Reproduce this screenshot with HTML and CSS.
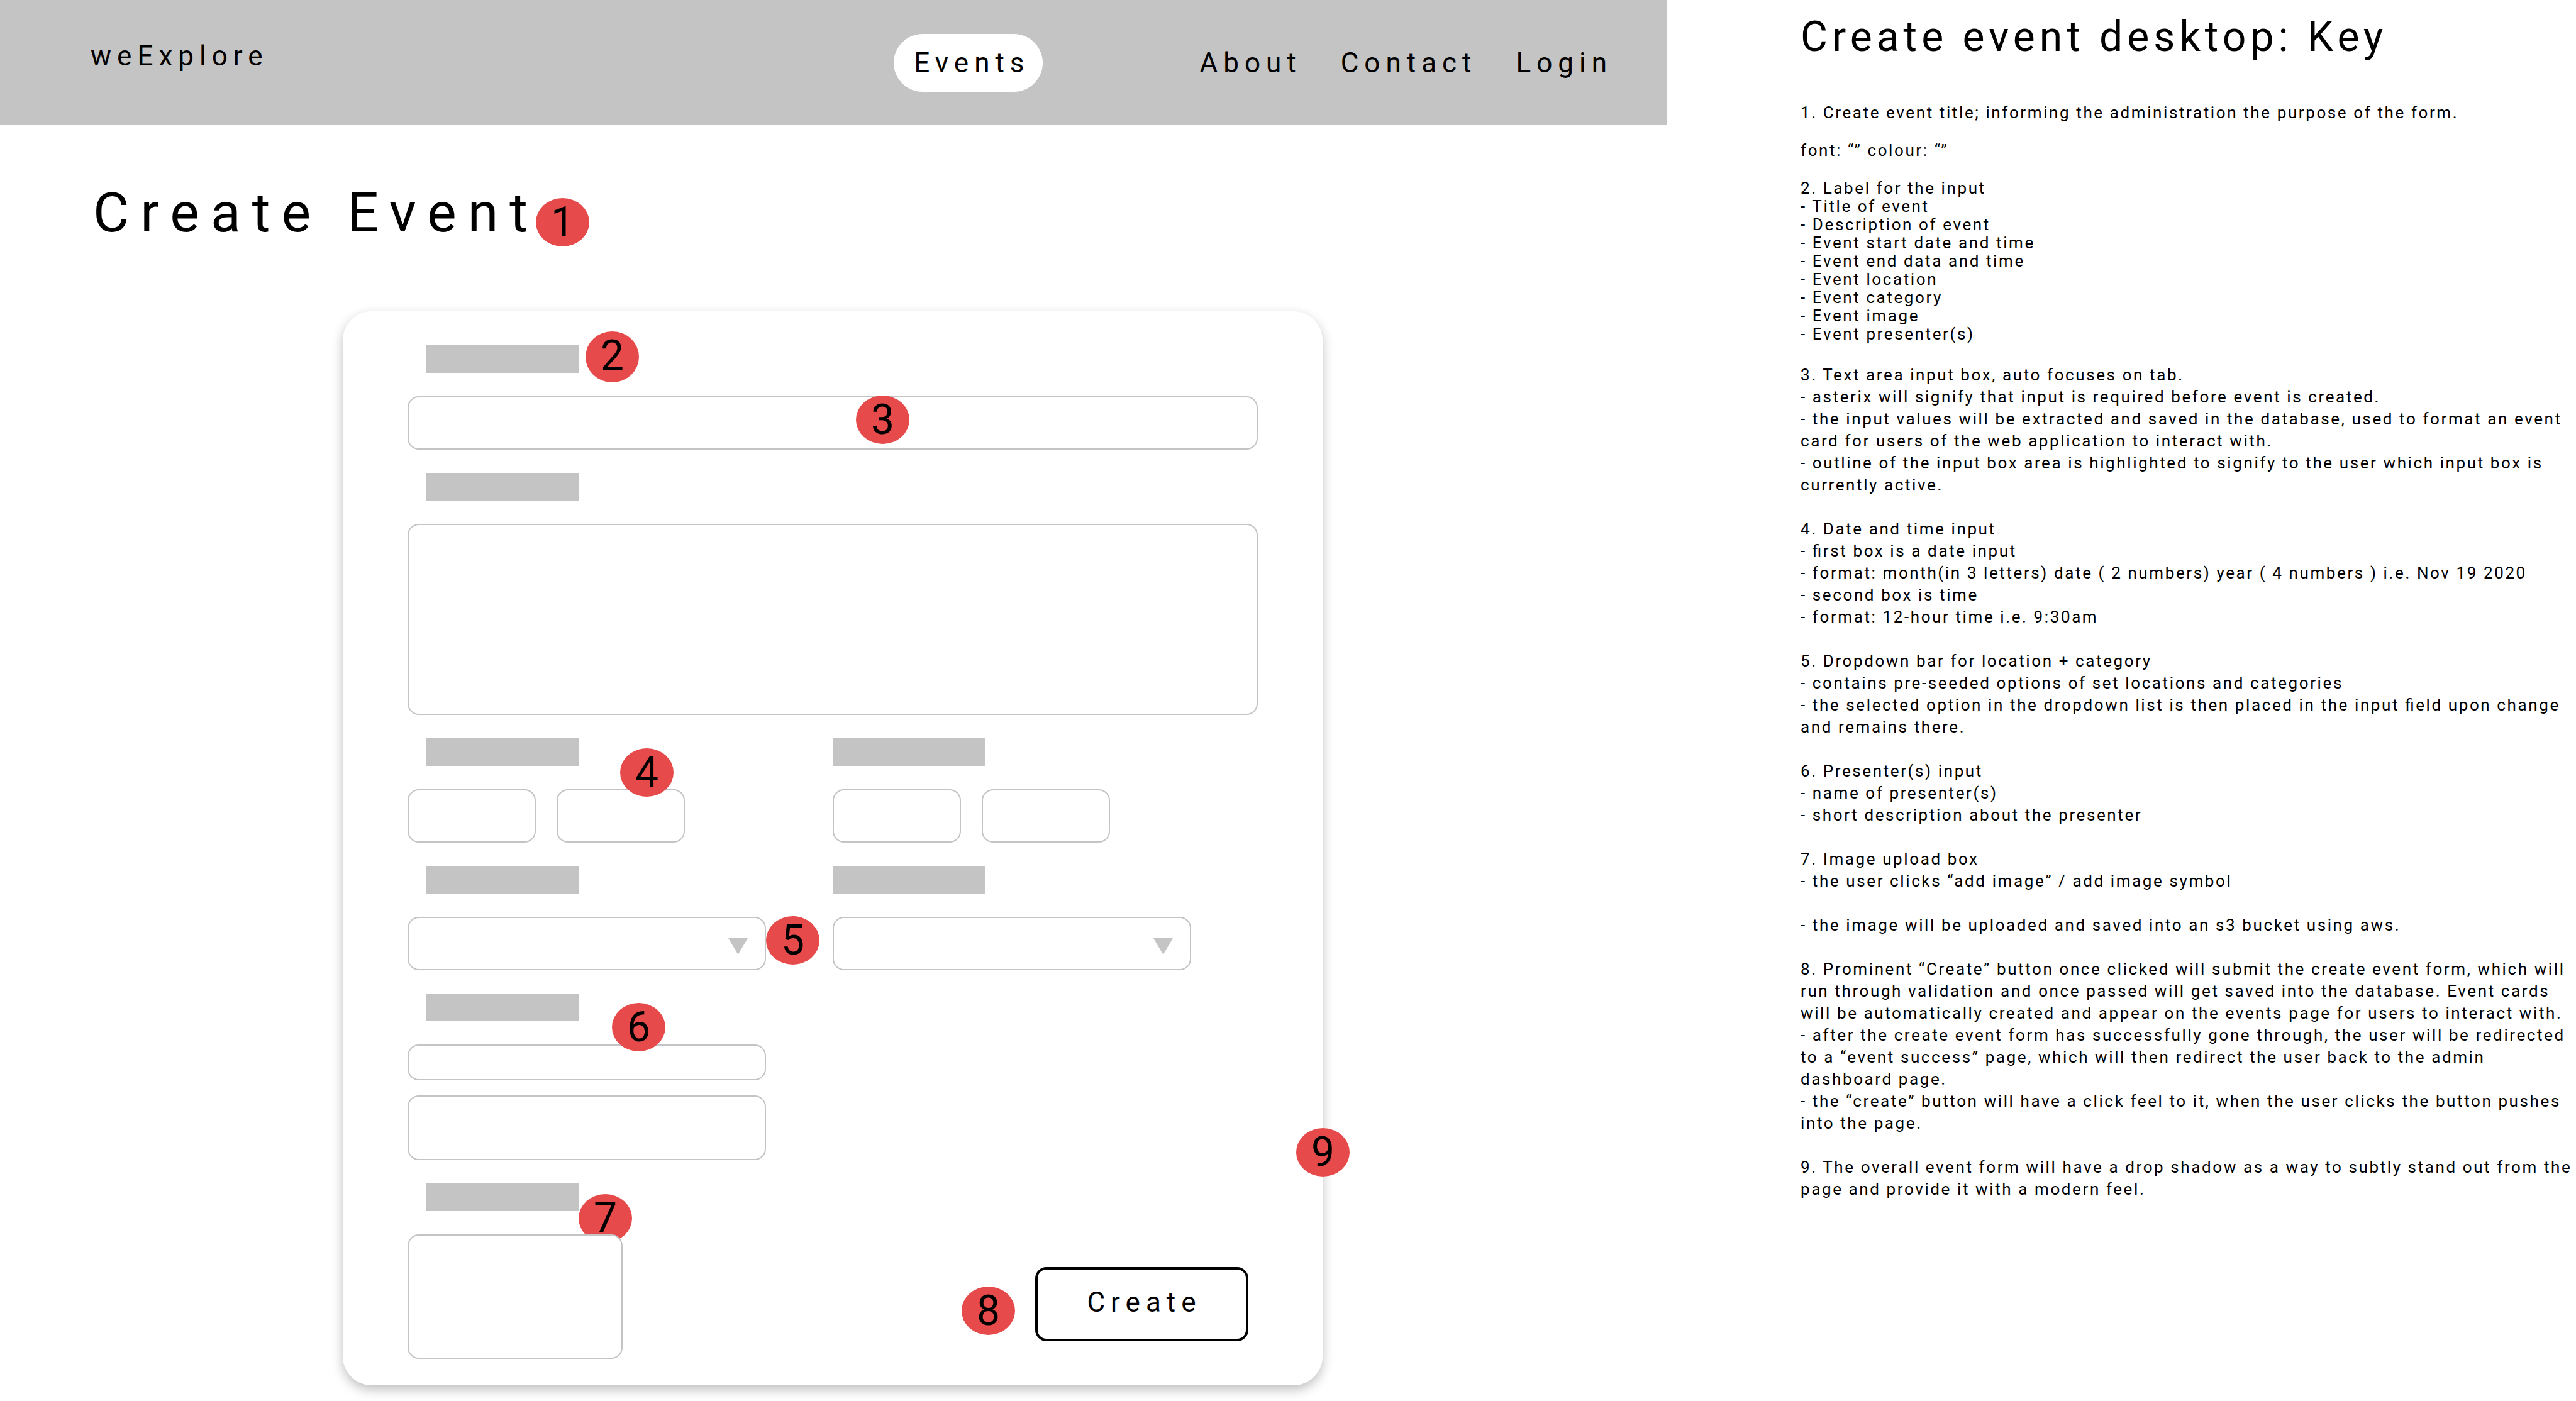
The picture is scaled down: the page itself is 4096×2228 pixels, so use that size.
FILE: index.html
```html
<!DOCTYPE html>
<html lang="en">
<head>
<meta charset="utf-8">
<meta name="viewport" content="width=device-width, initial-scale=1">
<title>weExplore - Create Event</title>
<link rel="stylesheet" href="styles.css">
</head>
<body>
<div class="board">
  <div class="screen">
    <header class="topbar">
      <a class="brand" href="#">weExplore</a>
      <nav class="nav">
        <a class="nav-link nav-link-active" href="#">Events</a>
        <a class="nav-link" href="#">About</a>
        <a class="nav-link" href="#">Contact</a>
        <a class="nav-link" href="#">Login</a>
      </nav>
    </header>
    <main class="content">
      <h1 class="page-title">Create Event<span class="badge badge-1">1</span></h1>
      <form class="card">
        <div class="field wide">
          <label class="bar" for="title"></label>
          <input class="box" id="title" type="text" aria-label="Title of event">
          <span class="badge badge-2">2</span>
          <span class="badge badge-3">3</span>
        </div>
        <div class="field wide">
          <label class="bar" for="description"></label>
          <textarea class="box box-tall" id="description" aria-label="Description of event"></textarea>
        </div>
        <div class="field">
          <label class="bar" for="start-date"></label>
          <div class="pair">
            <input class="box" id="start-date" type="text" aria-label="Start date">
            <input class="box" type="text" aria-label="Start time">
          </div>
          <span class="badge badge-4">4</span>
        </div>
        <div class="field field-right">
          <label class="bar" for="end-date"></label>
          <div class="pair">
            <input class="box" id="end-date" type="text" aria-label="End date">
            <input class="box" type="text" aria-label="End time">
          </div>
        </div>
        <div class="field">
          <label class="bar" for="location"></label>
          <div class="dropdown">
            <select class="box" id="location" aria-label="Event location"><option></option></select>
          </div>
          <span class="badge badge-5">5</span>
        </div>
        <div class="field field-right">
          <label class="bar" for="category"></label>
          <div class="dropdown">
            <select class="box" id="category" aria-label="Event category"><option></option></select>
          </div>
        </div>
        <div class="field wide">
          <label class="bar" for="presenter"></label>
          <div class="stack">
            <input class="box box-short" id="presenter" type="text" aria-label="Presenter name">
            <textarea class="box box-medium" aria-label="Presenter description"></textarea>
          </div>
          <span class="badge badge-6">6</span>
        </div>
        <div class="field">
          <label class="bar" for="image"></label>
          <span class="badge badge-7">7</span>
          <button class="box box-image" id="image" type="button" aria-label="Add image"></button>
        </div>
        <div class="actions">
          <div class="action">
            <button class="create" type="submit">Create</button>
            <span class="badge badge-8">8</span>
          </div>
        </div>
        <span class="badge badge-9">9</span>
      </form>
    </main>
  </div>
  <aside class="key">
    <h2 class="key-title">Create event desktop: Key</h2>
    <div class="notes-compact">
      <p>1. Create event title; informing the administration the purpose of the form.</p>
      <p>font: “” colour: “”</p>
      <div>
        <p>2. Label for the input</p>
        <p>- Title of event</p>
        <p>- Description of event</p>
        <p>- Event start date and time</p>
        <p>- Event end data and time</p>
        <p>- Event location</p>
        <p>- Event category</p>
        <p>- Event image</p>
        <p>- Event presenter(s)</p>
      </div>
    </div>
    <div class="notes">
      <div>
        <p>3. Text area input box, auto focuses on tab.</p>
        <p>- asterix will signify that input is required before event is created.</p>
        <p>- the input values will be extracted and saved in the database, used to format an event card for users of the web application to interact with.</p>
        <p>- outline of the input box area is highlighted to signify to the user which input box is currently active.</p>
      </div>
      <div>
        <p>4. Date and time input</p>
        <p>- first box is a date input</p>
        <p>- format: month(in 3 letters) date ( 2 numbers) year ( 4 numbers ) i.e. Nov 19 2020</p>
        <p>- second box is time</p>
        <p>- format: 12-hour time i.e. 9:30am</p>
      </div>
      <div>
        <p>5. Dropdown bar for location + category</p>
        <p>- contains pre-seeded options of set locations and categories</p>
        <p>- the selected option in the dropdown list is then placed in the input field upon change and remains there.</p>
      </div>
      <div>
        <p>6. Presenter(s) input</p>
        <p>- name of presenter(s)</p>
        <p>- short description about the presenter</p>
      </div>
      <div>
        <p>7. Image upload box</p>
        <p>- the user clicks “add image” / add image symbol</p>
      </div>
      <p>- the image will be uploaded and saved into an s3 bucket using aws.</p>
      <div>
        <p>8. Prominent “Create” button once clicked will submit the create event form, which will run through validation and once passed will get saved into the database. Event cards will be automatically created and appear on the events page for users to interact with.</p>
        <p>- after the create event form has successfully gone through, the user will be redirected to a “event success” page, which will then redirect the user back to the admin dashboard page.</p>
        <p>- the “create” button will have a click feel to it, when the user clicks the button pushes into the page.</p>
      </div>
      <p>9. The overall event form will have a drop shadow as a way to subtly stand out from the page and provide it with a modern feel.</p>
    </div>
  </aside>
</div>
</body>
</html>
```

FILE: styles.css
```css
* {
  box-sizing: border-box;
}

body {
  margin: 0;
  background: #fff;
  color: #000;
  font-family: Roboto, "Liberation Sans", sans-serif;
}

h1, h2, p {
  margin: 0;
  font-weight: 400;
}

.board {
  display: grid;
  grid-template-columns: minmax(0, 2650fr) minmax(0, 1446fr);
}

/* Top bar */
.topbar {
  display: flex;
  align-items: center;
  justify-content: space-between;
  height: 199px;
  padding: 0 86px 0 144px;
  background: #c4c4c4;
  font-size: 44px;
  line-height: 52px;
  letter-spacing: 9px;
}

.brand,
.nav-link {
  color: inherit;
  text-decoration: none;
}

.brand {
  padding-bottom: 22px;
}

.nav {
  display: flex;
  align-items: center;
  gap: 62px;
}

.nav-link-active {
  margin-right: 188px;
  padding: 20px 20px 20px 32px;
  border-radius: 46px;
  background: #fff;
}

/* Page heading */
.content {
  padding: 0 2px 25px 0;
}

.page-title {
  position: relative;
  width: max-content;
  margin: 87px 0 105px 148px;
  font-size: 88px;
  line-height: 104px;
  letter-spacing: 18px;
}

/* Form card */
.card {
  position: relative;
  display: grid;
  grid-template-columns: 1fr 1fr;
  row-gap: 37px;
  max-width: 1558px;
  margin: 0 auto;
  padding: 54px 103px 42px;
  border-radius: 46px;
  background: #fff;
  box-shadow: 0 7px 18px rgba(0, 0, 0, 0.25);
}

.field {
  position: relative;
  display: flex;
  flex-direction: column;
  gap: 37px;
}

.wide {
  grid-column: 1 / -1;
}

.bar {
  width: 243px;
  height: 44px;
  margin-left: 29px;
  background: #c4c4c4;
}

.field-right .bar {
  margin-left: 0;
}

.box {
  display: block;
  width: 100%;
  height: 85px;
  margin: 0;
  padding: 0 24px;
  border: 2px solid #c4c4c4;
  border-radius: 18px;
  background: #fff;
  color: inherit;
  font: inherit;
  font-size: 26px;
  appearance: none;
  resize: none;
}

.box-tall {
  height: 304px;
}

.box-short {
  height: 57px;
}

.box-medium {
  height: 103px;
}

.box-image {
  position: relative;
  width: 342px;
  height: 198px;
}

.pair {
  display: flex;
  gap: 33px;
}

.pair .box {
  width: 204px;
}

.stack {
  display: flex;
  flex-direction: column;
  gap: 24px;
  width: 570px;
}

.dropdown {
  position: relative;
  width: 570px;
}

.dropdown::after {
  content: "";
  position: absolute;
  top: 34px;
  right: 29px;
  width: 31px;
  height: 26px;
  background: #c4c4c4;
  clip-path: polygon(0 0, 100% 0, 50% 100%);
  pointer-events: none;
}

.actions {
  display: flex;
  align-items: flex-end;
  justify-content: flex-end;
  padding: 0 15px 28px 0;
}

.action {
  position: relative;
}

.create {
  display: block;
  width: 339px;
  height: 118px;
  padding: 0 0 6px 8px;
  border: 4px solid #000;
  border-radius: 18px;
  background: #fff;
  color: #000;
  font-family: inherit;
  font-size: 44px;
  line-height: 52px;
  letter-spacing: 9px;
}

/* Numbered callouts laid over the form */
.badge {
  position: absolute;
  width: 85px;
  height: 77px;
  border-radius: 50%;
  background: #e64a4a;
  font-size: 66px;
  line-height: 77px;
  letter-spacing: 0;
  text-align: center;
}

.badge-1 { left: 704px; top: 29px; }
.badge-2 { left: 283px; top: -22px; height: 81px; }
.badge-3 { left: 713px; top: 80px; }
.badge-4 { left: 338px; top: 16px; }
.badge-5 { left: 570px; top: 80px; }
.badge-6 { left: 325px; top: 15px; }
.badge-7 { left: 272px; top: 17px; }
.badge-8 { left: -117px; top: 31px; }
.badge-9 { right: -43px; top: 1299px; }

/* Key column */
.key {
  padding: 20px 0 0 213px;
  font-size: 26px;
  letter-spacing: 0.1em;
  font-feature-settings: "liga" 1;
}

.key-title {
  margin-bottom: 67px;
  font-size: 66px;
  line-height: 78px;
  letter-spacing: 7px;
}

.notes-compact,
.notes {
  display: flex;
  flex-direction: column;
}

.notes-compact {
  gap: 31px;
  line-height: 29px;
}

.notes {
  gap: 35px;
  margin-top: 33px;
  line-height: 35px;
}
```
